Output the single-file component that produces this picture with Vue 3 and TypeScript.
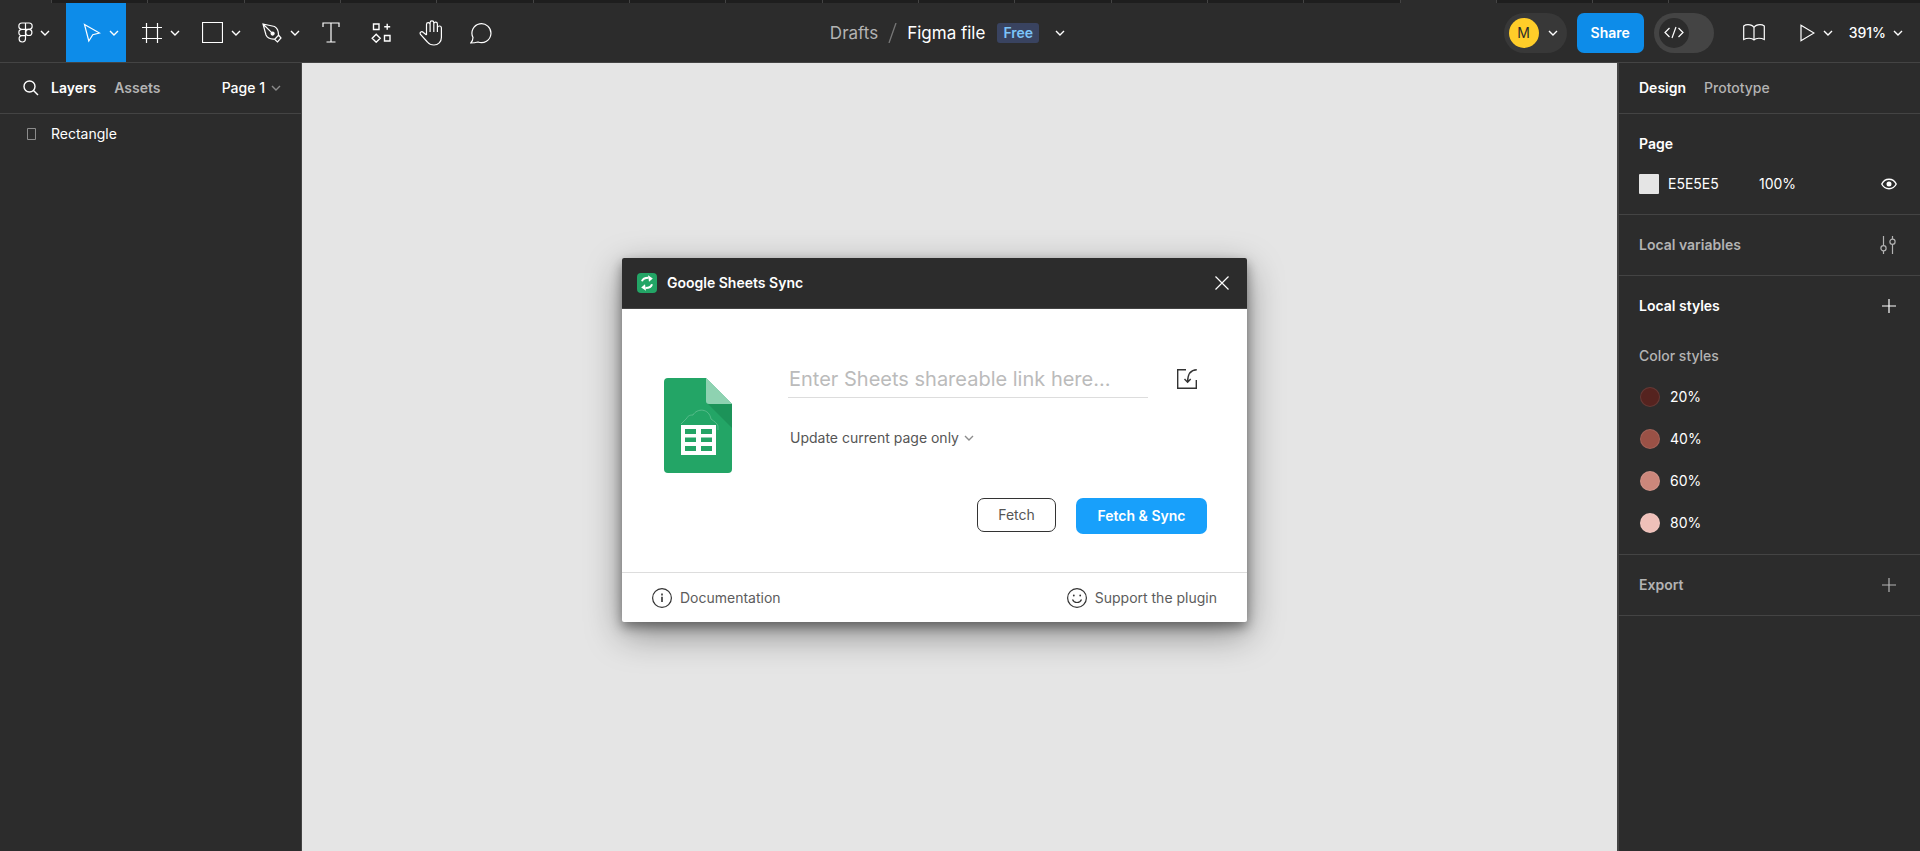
<script setup lang="ts">
import { ref } from 'vue'

interface ColorStyle {
  name: string
  color: string
}

const tabs: string[] = Array.from({ length: 15 }, (_, i) => `tab-${i}`)
const activeTab = 'tab-14'

const colorStyles: ColorStyle[] = [
  { name: '20%', color: '#55231f' },
  { name: '40%', color: '#9a5146' },
  { name: '60%', color: '#cc877b' },
  { name: '80%', color: '#efc0b9' },
]

const sheetLink = ref('')
const updateScope = ref('page')
const devMode = ref(false)
</script>

<template>
  <div class="app">
    <div class="tab-strip" aria-hidden="true">
      <span class="tab tab-home"></span>
      <span v-for="t in tabs" :key="t" class="tab" :class="{ open: t === activeTab }"></span>
      <span class="tab"></span>
      <span class="tab tab-short"></span>
      <span class="tab tab-rest"></span>
    </div>

    <header class="toolbar">
      <nav class="tools" aria-label="Tools">
        <button class="tool main-menu" aria-label="Main menu">
          <svg width="15" height="21" viewBox="0 0 15 21" class="ico"><path d="M7.5 1H4a3.1 3.1 0 0 0 0 6.3h3.5zM7.5 1H11a3.1 3.1 0 0 1 0 6.3H7.5zM7.5 7.3H4a3.1 3.1 0 0 0 0 6.3h3.5zM7.5 13.6H4a3.2 3.2 0 1 0 3.5 3.2z" /><circle cx="10.8" cy="10.4" r="3.1" /></svg>
          <svg class="chev" width="10" height="6" viewBox="0 0 10 6"><path d="M1 1l4 4 4-4" /></svg>
        </button>
        <button class="tool wide selected" aria-label="Move">
          <svg width="18" height="20" viewBox="0 0 18 20" class="ico"><path d="M1.5 1.5l15 8.5-6.700 1.700L5.800 18z" /></svg>
          <svg class="chev" width="10" height="6" viewBox="0 0 10 6"><path d="M1 1l4 4 4-4" /></svg>
        </button>
        <button class="tool wide" aria-label="Frame">
          <svg width="20" height="20" viewBox="0 0 20 20" class="ico"><path d="M4.5 0v20M15.5 0v20M0 4.5h20M0 15.5h20" /></svg>
          <svg class="chev" width="10" height="6" viewBox="0 0 10 6"><path d="M1 1l4 4 4-4" /></svg>
        </button>
        <button class="tool wide" aria-label="Rectangle">
          <svg width="21" height="21" viewBox="0 0 21 21" class="ico"><path d="M.5.5h20v20H.5z" /></svg>
          <svg class="chev" width="10" height="6" viewBox="0 0 10 6"><path d="M1 1l4 4 4-4" /></svg>
        </button>
        <button class="tool wide" aria-label="Pen">
          <svg width="20" height="20" viewBox="0 0 20 20" class="ico"><path d="M1 1l11.500 2.500c3 1.500 4 5.500 4 8.500l2.500 3-3.500 4-3.200-3c-3.500.3-6.800-1-8.300-4zM1 1l8.700 8.700M13 16l4-4.300" /><circle cx="10.6" cy="10.6" r="1.5" class="fill" /></svg>
          <svg class="chev" width="10" height="6" viewBox="0 0 10 6"><path d="M1 1l4 4 4-4" /></svg>
        </button>
        <button class="tool" aria-label="Text">
          <svg width="18" height="21" viewBox="0 0 18 21" class="ico"><path d="M1 5V1h16v4M9 1v19M4.500 20h9" /></svg>
        </button>
        <button class="tool" aria-label="Resources">
          <svg width="20" height="20" viewBox="0 0 20 20" class="ico mid"><path d="M2.500 1h5.500v5.500H2.500zM13.500 12.500h5.500V18h-5.500zM16.200.8v6M13.200 3.800h6M5.200 11.200l4 4-4 4-4-4z" /></svg>
        </button>
        <button class="tool" aria-label="Hand tool">
          <svg width="24" height="26" viewBox="0 0 24 26" class="ico"><path d="M7.500 15V4.500a1.800 1.800 0 0 1 3.600 0V12M11.100 12V2.800a1.800 1.800 0 0 1 3.700 0V12M14.800 12V4a1.800 1.800 0 0 1 3.600 0v8M18.400 8a2 2 0 0 1 4 0v9.500c0 4.500-3.200 7.500-7.400 7.500-3 0-5-1-6.600-3L1.500 14.500c-1.300-2.500 1.300-3.700 2.900-2L7.500 15" /></svg>
        </button>
        <button class="tool" aria-label="Comment">
          <svg width="23" height="22" viewBox="0 0 23 22" class="ico"><path d="M3 15.500A9.500 9.500 0 1 1 8 20Q4.500 21 .8 21 3 18.500 3 15.500z" /></svg>
        </button>
      </nav>

      <div class="file">
        <a class="folder" href="#drafts">Drafts</a>
        <svg class="slash" width="9" height="20" viewBox="0 0 9 20"><path d="M8 0L1 20" /></svg>
        <span class="file-name">Figma file</span>
        <span class="plan">Free</span>
        <button class="file-menu" aria-label="File menu">
          <svg class="chev" width="10" height="6" viewBox="0 0 10 6"><path d="M1 1l4 4 4-4" /></svg>
        </button>
      </div>

      <div class="actions">
        <button class="user" aria-label="Account">
          <span class="avatar">M</span>
          <svg class="chev" width="10" height="6" viewBox="0 0 10 6"><path d="M1 1l4 4 4-4" /></svg>
        </button>
        <button class="share">Share</button>
        <label class="dev-toggle">
          <input v-model="devMode" type="checkbox" role="switch" aria-label="Dev mode" />
          <span class="knob">
            <svg width="20" height="13" viewBox="0 0 20 13" class="ico"><path d="M5.500 2L1 6.500 5.500 11M14.500 2L19 6.500 14.500 11M12 1L8 12" /></svg>
          </span>
        </label>
        <button class="plain book" aria-label="Libraries">
          <svg width="22" height="17" viewBox="0 0 22 17" class="ico"><path d="M11 3.500C9.500 1 7 .7 5 .7c-2 0-3.200.5-4.300 1.300v13.500C3.500 14 9 13.500 11 16c2-2.500 7.500-2 10.300-.5V2C20.200 1.200 19 .7 17 .7c-2 0-4.500.3-6 2.800zM11 3.500V16" /></svg>
        </button>
        <button class="plain play" aria-label="Present">
          <svg width="15" height="18" viewBox="0 0 15 18" class="ico"><path d="M1 1.200L14 9 1 16.800z" /></svg>
          <svg class="chev" width="10" height="6" viewBox="0 0 10 6"><path d="M1 1l4 4 4-4" /></svg>
        </button>
        <button class="plain zoom">
          391%
          <svg class="chev" width="10" height="6" viewBox="0 0 10 6"><path d="M1 1l4 4 4-4" /></svg>
        </button>
      </div>
    </header>

    <div class="workspace">
      <aside class="left">
        <div class="left-head">
          <button class="plain" aria-label="Search">
            <svg width="16" height="16" viewBox="0 0 16 16" class="ico mid"><circle cx="6.5" cy="6.5" r="5.5" /><path d="M10.500 10.500L15 15" /></svg>
          </button>
          <button class="plain strong">Layers</button>
          <button class="plain strong dim">Assets</button>
          <button class="plain page-menu">
            Page 1
            <svg class="chev faint" width="10" height="6" viewBox="0 0 10 6"><path d="M1 1l4 4 4-4" /></svg>
          </button>
        </div>
        <ul class="layers">
          <li>
            <svg width="9" height="12" viewBox="0 0 9 12"><path d="M.5.5h8v11h-8z" /></svg>
            <span>Rectangle</span>
          </li>
        </ul>
      </aside>

      <main class="canvas">
        <section class="dialog" role="dialog" aria-labelledby="dialog-title">
          <header class="dialog-head">
            <svg class="logo" width="20" height="20" viewBox="0 0 20 20">
              <rect width="20" height="20" rx="4" fill="#23a566" />
              <path d="M5 8.300C5.700 5.700 8 4.800 11.500 4.800" stroke="#fff" stroke-width="2" fill="none" />
              <path d="M11 2.300l4.800 3.200L12 8.800z" fill="#fff" />
              <path d="M15 11.200c-.7 2.600-3 3.800-6.500 3.800" stroke="#fff" stroke-width="2" fill="none" />
              <path d="M9 17.700l-4.800-3.200L8 11.200z" fill="#fff" />
            </svg>
            <h1 id="dialog-title">Google Sheets Sync</h1>
            <button class="plain" aria-label="Close">
              <svg width="14" height="14" viewBox="0 0 14 14" class="ico"><path d="M.5.5l13 13M13.500.5l-13 13" /></svg>
            </button>
          </header>

          <div class="dialog-body">
            <svg class="sheet" width="68" height="95" viewBox="0 0 68 95">
              <path d="M4 0h38l26 26v65a4 4 0 0 1-4 4H4a4 4 0 0 1-4-4V4a4 4 0 0 1 4-4z" fill="#23a566" />
              <path d="M43 25l25 25V26z" fill="#1c9359" />
              <path d="M42 0l26 26H45a3 3 0 0 1-3-3z" fill="#8ed2b1" />
              <path d="M17 46l6-6c1-2 2-3 6-3 4-7 16-7 18 4 4 3 6 4 7 7v4" fill="none" stroke="#6cc398" stroke-width="0.7" />
              <path fill-rule="evenodd" d="M17 47h35v30H17zM21 51v5h11v-5zM37 51v5h11v-5zM21 59.500v4.500h11v-4.500zM37 59.500v4.500h11v-4.500zM21 68v5h11v-5zM37 68v5h11v-5z" fill="#fff" />
            </svg>

            <form class="sync-form" @submit.prevent>
              <div class="link-row">
                <input v-model="sheetLink" type="text" aria-label="Sheets shareable link" placeholder="Enter Sheets shareable link here..." />
                <button type="button" class="plain" aria-label="Import link">
                  <svg width="20" height="20" viewBox="0 0 20 20" class="import"><path d="M9 .7H.7v18.600h18.600V11M19.800.8C13 1 10.600 5 10.600 13M7.500 10l3.100 3.300 3.100-3.300" /></svg>
                </button>
              </div>
              <label class="scope">
                <select v-model="updateScope" aria-label="Update scope">
                  <option value="page">Update current page only</option>
                </select>
                <svg class="chev faint" width="10" height="6" viewBox="0 0 10 6"><path d="M1 1l4 4 4-4" /></svg>
              </label>
              <div class="buttons">
                <button type="button" class="fetch">Fetch</button>
                <button type="submit" class="sync">Fetch &amp; Sync</button>
              </div>
            </form>
          </div>

          <footer class="dialog-foot">
            <a href="#documentation">
              <svg width="20" height="20" viewBox="0 0 20 20"><circle cx="10" cy="10" r="9.400" /><path d="M10 8.800V14M10 5.600v1.800" stroke-width="1.600" /></svg>
              Documentation
            </a>
            <a href="#support">
              <svg width="20" height="20" viewBox="0 0 20 20"><circle cx="10" cy="10" r="9.400" /><path d="M5.500 11.500c1.600 4 7.400 4 9 0" /><circle cx="6.800" cy="7.500" r="0.900" class="dot" /><circle cx="13.200" cy="7.500" r="0.900" class="dot" /></svg>
              Support the plugin
            </a>
          </footer>
        </section>
      </main>

      <aside class="right">
        <div class="right-head">
          <button class="plain strong">Design</button>
          <button class="plain medium dim">Prototype</button>
        </div>

        <section class="page-section">
          <h2>Page</h2>
          <div class="fill-row">
            <span class="swatch"></span>
            <span class="hex">E5E5E5</span>
            <span class="opacity">100%</span>
            <button class="plain" aria-label="Toggle visibility">
              <svg width="16" height="12" viewBox="0 0 16 12" class="ico mid"><path d="M.8 6c3-6.300 11.400-6.300 14.400 0-3 6.300-11.400 6.300-14.400 0z" /><circle cx="8" cy="6" r="1.800" class="fill" /></svg>
            </button>
          </div>
        </section>

        <section class="row-section">
          <h2 class="dim">Local variables</h2>
          <button class="plain dim" aria-label="Open variables">
            <svg width="16" height="18" viewBox="0 0 16 18" class="ico"><path d="M3.500 0v9.500M3.500 15v3M12.500 0v3M12.500 8.500V18" /><circle cx="3.500" cy="12.300" r="2.600" /><circle cx="12.500" cy="5.700" r="2.600" /></svg>
          </button>
        </section>

        <section class="styles-section">
          <div class="row-section bare">
            <h2>Local styles</h2>
            <button class="plain" aria-label="Add style">
              <svg width="14" height="14" viewBox="0 0 14 14" class="ico"><path d="M7 0v14M0 7h14" /></svg>
            </button>
          </div>
          <h3>Color styles</h3>
          <ul>
            <li v-for="s in colorStyles" :key="s.name">
              <span class="dot" :style="{ background: s.color }"></span>
              <span>{{ s.name }}</span>
            </li>
          </ul>
        </section>

        <section class="row-section">
          <h2 class="dim">Export</h2>
          <button class="plain dim" aria-label="Add export">
            <svg width="14" height="14" viewBox="0 0 14 14" class="ico"><path d="M7 0v14M0 7h14" /></svg>
          </button>
        </section>
      </aside>
    </div>
  </div>
</template>

<style>
body {
  margin: 0;
  background: #2c2c2c;
}
</style>

<style scoped>
* {
  box-sizing: border-box;
}
.app {
  display: flex;
  flex-direction: column;
  min-height: 100vh;
  background: #2c2c2c;
  color: #fff;
  font: 14px/20px Inter, "Liberation Sans", sans-serif;
}
button,
input,
select {
  font: inherit;
  color: inherit;
}
button {
  padding: 0;
  border: 0;
  background: none;
  cursor: pointer;
}
svg {
  display: block;
  flex: none;
}
h1,
h2,
h3,
ul {
  margin: 0;
  padding: 0;
  list-style: none;
}
.ico {
  fill: none;
  stroke: currentColor;
  stroke-width: 1.2;
}
.ico.mid {
  stroke-width: 1.4;
}
.fill {
  fill: currentColor;
}
.chev {
  fill: none;
  stroke: currentColor;
  stroke-width: 1.4;
}
.faint {
  color: #8c8c8c;
}
.plain {
  display: flex;
  align-items: center;
}
.strong {
  font-weight: 600;
}
.medium {
  font-weight: 500;
}
.dim {
  color: #b3b3b3;
}

.tab-strip {
  display: flex;
  height: 3px;
  background: #1e1e1e;
}
.tab {
  flex: 0 1 96px;
  border-left: 1px solid #444;
}
.tab:nth-child(3n) {
  flex-basis: 97px;
}
.tab.tab-home {
  flex-basis: 51px;
  border: 0;
  background: #2c2c2c;
}
.tab.tab-short {
  flex-basis: 76px;
}
.tab.tab-rest {
  flex: 1;
}
.open {
  background: #2c2c2c;
}

.toolbar {
  display: grid;
  grid-template-columns: 1fr auto 1fr;
  height: 60px;
  border-bottom: 1px solid #444;
}
.tools,
.file,
.actions {
  display: flex;
  align-items: center;
}
.tool {
  display: flex;
  align-items: center;
  justify-content: center;
  width: 50px;
  height: 59px;
}
.wide {
  gap: 8px;
  width: 60px;
  padding-left: 10px;
}
.main-menu {
  gap: 7px;
  width: 66px;
  padding-left: 2px;
}
.selected {
  background: #0d8ce9;
}
.file {
  font-size: 17px;
}
.folder {
  color: #b3b3b3;
  text-decoration: none;
}
.slash {
  margin: 0 10px;
  stroke: #777;
  stroke-width: 1.3;
}
.plan {
  margin-left: 12px;
  padding: 0 6px;
  border-radius: 3px;
  background: #394360;
  color: #7cc4f8;
  font-size: 14px;
  font-weight: 600;
}
.file-menu {
  display: flex;
  justify-content: center;
  width: 42px;
  margin-right: 9px;
  padding: 8px 0;
}
.actions {
  justify-content: flex-end;
  padding-right: 17px;
  font-weight: 500;
}
.user {
  display: flex;
  align-items: center;
  gap: 9px;
  width: 63px;
  height: 40px;
  padding-left: 5px;
  border-radius: 20px;
  background: #383838;
}
.avatar {
  width: 30px;
  border-radius: 50%;
  background: #ffcd29;
  color: #2c2c2c;
  font-weight: 400;
  line-height: 30px;
}
.share {
  width: 67px;
  height: 40px;
  margin: 0 10px;
  border-radius: 7px;
  background: #0d8ce9;
  font-weight: 600;
}
.dev-toggle {
  display: flex;
  align-items: center;
  width: 60px;
  height: 40px;
  padding: 5px;
  border-radius: 20px;
  background: #444;
  cursor: pointer;
}
.dev-toggle input {
  width: 0;
  height: 0;
  margin: 0;
  appearance: none;
}
.knob {
  display: grid;
  place-items: center;
  width: 30px;
  height: 30px;
  border-radius: 50%;
  background: #2c2c2c;
}
.book {
  margin: 0 35px 0 29px;
}
.play {
  gap: 8px;
  margin-right: 16px;
}
.zoom {
  gap: 7px;
}

.workspace {
  display: flex;
  flex: 1;
}
.left {
  flex: 0 0 302px;
  border-right: 1px solid #444;
}
.left-head,
.right-head {
  display: flex;
  align-items: center;
  height: 51px;
  border-bottom: 1px solid #444;
}
.left-head {
  gap: 18px;
  padding: 0 20px 0 23px;
}
.left-head .plain:first-child {
  margin-right: -6px;
}
.page-menu {
  gap: 6px;
  margin-left: auto;
  font-weight: 500;
}
.layers li {
  display: flex;
  align-items: center;
  gap: 15px;
  height: 40px;
  padding-left: 27px;
}
.layers path {
  fill: none;
  stroke: #8c8c8c;
}

.canvas {
  display: grid;
  flex: 1;
  place-items: center;
  min-width: 0;
  padding: 0 50px 34px 0;
  background: #e5e5e5;
}
.dialog {
  width: 625px;
  border-radius: 2px;
  background: #fff;
  box-shadow: 0 12px 36px rgba(0, 0, 0, 0.4), 0 5px 12px rgba(0, 0, 0, 0.4);
}
.dialog-head {
  display: flex;
  align-items: center;
  gap: 10px;
  height: 51px;
  padding: 0 18px 0 15px;
  border-bottom: 1px solid #444;
  border-radius: 2px 2px 0 0;
  background: #2c2c2c;
}
.dialog-head .plain {
  margin-left: auto;
}
h1,
h2 {
  font-size: 14px;
  font-weight: 600;
}
.dialog-body {
  display: flex;
  gap: 56px;
  padding: 53px 40px 38px 42px;
  color: #555;
}
.sheet {
  margin-top: 16px;
}
.sync-form {
  flex: 1;
}
.link-row {
  display: flex;
  align-items: center;
  justify-content: space-between;
  padding-right: 10px;
}
.link-row input {
  width: 360px;
  height: 36px;
  padding: 0 0 2px 1px;
  border: 0;
  border-bottom: 1px solid #ddd;
  outline: 0;
  background: none;
  font-size: 20px;
}
.link-row .plain {
  padding-bottom: 2px;
}
.link-row input::placeholder {
  color: #bbb;
  opacity: 1;
}
.import {
  fill: none;
  stroke: #333;
  stroke-width: 1.4;
}
.scope {
  display: inline-flex;
  align-items: center;
  gap: 5px;
  margin-top: 30px;
}
.scope select {
  padding: 0 0 0 2px;
  border: 0;
  background: none;
  appearance: none;
}
.buttons {
  display: flex;
  align-items: flex-start;
  justify-content: flex-end;
  gap: 20px;
  margin-top: 50px;
}
.fetch,
.sync {
  border-radius: 7px;
}
.fetch {
  width: 79px;
  height: 34px;
  border: 1px solid #333;
}
.sync {
  width: 131px;
  height: 36px;
  background: #18a0fb;
  color: #fff;
  font-weight: 600;
}
.dialog-foot {
  display: flex;
  align-items: center;
  justify-content: space-between;
  height: 50px;
  padding: 0 30px;
  border-top: 1px solid #ddd;
}
.dialog-foot a {
  display: flex;
  align-items: center;
  gap: 8px;
  color: #5c5c5c;
  text-decoration: none;
}
.dialog-foot svg {
  fill: none;
  stroke: #333;
  stroke-width: 1.2;
}
.dialog-foot .dot {
  fill: #333;
  stroke: none;
}

.right {
  flex: 0 0 303px;
  border-left: 2px solid #444;
}
.right-head {
  gap: 18px;
  padding-left: 20px;
}
.page-section {
  height: 101px;
  padding: 20px 23px 0 20px;
  border-bottom: 1px solid #444;
}
.fill-row {
  display: flex;
  align-items: center;
  margin-top: 20px;
}
.fill-row .plain {
  margin-left: auto;
}
.swatch {
  width: 20px;
  height: 20px;
  border-radius: 1px;
  background: #e5e5e5;
}
.hex {
  width: 91px;
  margin-left: 9px;
}
.row-section {
  display: flex;
  align-items: center;
  justify-content: space-between;
  height: 61px;
  padding: 0 24px 0 20px;
  border-bottom: 1px solid #444;
}
.row-section.bare {
  height: 60px;
  border: 0;
}
.styles-section {
  border-bottom: 1px solid #444;
  padding-bottom: 10px;
}
h3 {
  padding: 10px 20px;
  color: #b3b3b3;
  font-size: 14px;
  font-weight: 500;
}
.styles-section li {
  display: flex;
  align-items: center;
  gap: 10px;
  height: 42px;
  padding-left: 21px;
}
.styles-section .dot {
  width: 20px;
  height: 20px;
  border: 1px solid rgba(255, 255, 255, 0.1);
  border-radius: 50%;
}
</style>
